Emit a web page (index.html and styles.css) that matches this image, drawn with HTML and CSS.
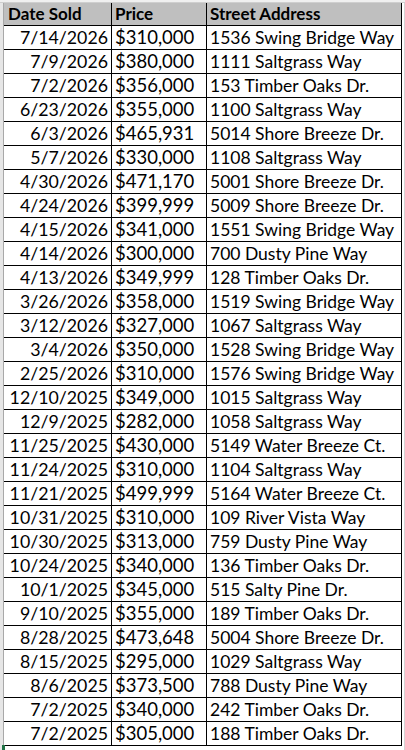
FILE: index.html
```html
<!DOCTYPE html>
<html>
<head>
<meta charset="utf-8">
<link rel="stylesheet" href="styles.css">
</head>
<body>
<div class="top"></div>
<div class="main">
  <div class="rowhdr"></div>
  <div class="sheet">
    <div class="row head"><div class="c">Date Sold</div><div class="c">Price</div><div class="c">Street Address</div></div>
    <div class="row"><div class="c d">7/14/2026</div><div class="c p">$310,000</div><div class="c a">1536 Swing Bridge Way</div></div>
    <div class="row"><div class="c d">7/9/2026</div><div class="c p">$380,000</div><div class="c a">1111 Saltgrass Way</div></div>
    <div class="row"><div class="c d">7/2/2026</div><div class="c p">$356,000</div><div class="c a">153 Timber Oaks Dr.</div></div>
    <div class="row"><div class="c d">6/23/2026</div><div class="c p">$355,000</div><div class="c a">1100 Saltgrass Way</div></div>
    <div class="row"><div class="c d">6/3/2026</div><div class="c p">$465,931</div><div class="c a">5014 Shore Breeze Dr.</div></div>
    <div class="row"><div class="c d">5/7/2026</div><div class="c p">$330,000</div><div class="c a">1108 Saltgrass Way</div></div>
    <div class="row"><div class="c d">4/30/2026</div><div class="c p">$471,170</div><div class="c a">5001 Shore Breeze Dr.</div></div>
    <div class="row"><div class="c d">4/24/2026</div><div class="c p">$399,999</div><div class="c a">5009 Shore Breeze Dr.</div></div>
    <div class="row"><div class="c d">4/15/2026</div><div class="c p">$341,000</div><div class="c a">1551 Swing Bridge Way</div></div>
    <div class="row"><div class="c d">4/14/2026</div><div class="c p">$300,000</div><div class="c a">700 Dusty Pine Way</div></div>
    <div class="row"><div class="c d">4/13/2026</div><div class="c p">$349,999</div><div class="c a">128 Timber Oaks Dr.</div></div>
    <div class="row"><div class="c d">3/26/2026</div><div class="c p">$358,000</div><div class="c a">1519 Swing Bridge Way</div></div>
    <div class="row"><div class="c d">3/12/2026</div><div class="c p">$327,000</div><div class="c a">1067 Saltgrass Way</div></div>
    <div class="row"><div class="c d">3/4/2026</div><div class="c p">$350,000</div><div class="c a">1528 Swing Bridge Way</div></div>
    <div class="row"><div class="c d">2/25/2026</div><div class="c p">$310,000</div><div class="c a">1576 Swing Bridge Way</div></div>
    <div class="row"><div class="c d">12/10/2025</div><div class="c p">$349,000</div><div class="c a">1015 Saltgrass Way</div></div>
    <div class="row"><div class="c d">12/9/2025</div><div class="c p">$282,000</div><div class="c a">1058 Saltgrass Way</div></div>
    <div class="row"><div class="c d">11/25/2025</div><div class="c p">$430,000</div><div class="c a">5149 Water Breeze Ct.</div></div>
    <div class="row"><div class="c d">11/24/2025</div><div class="c p">$310,000</div><div class="c a">1104 Saltgrass Way</div></div>
    <div class="row"><div class="c d">11/21/2025</div><div class="c p">$499,999</div><div class="c a">5164 Water Breeze Ct.</div></div>
    <div class="row"><div class="c d">10/31/2025</div><div class="c p">$310,000</div><div class="c a">109 River Vista Way</div></div>
    <div class="row"><div class="c d">10/30/2025</div><div class="c p">$313,000</div><div class="c a">759 Dusty Pine Way</div></div>
    <div class="row"><div class="c d">10/24/2025</div><div class="c p">$340,000</div><div class="c a">136 Timber Oaks Dr.</div></div>
    <div class="row"><div class="c d">10/1/2025</div><div class="c p">$345,000</div><div class="c a">515 Salty Pine Dr.</div></div>
    <div class="row"><div class="c d">9/10/2025</div><div class="c p">$355,000</div><div class="c a">189 Timber Oaks Dr.</div></div>
    <div class="row"><div class="c d">8/28/2025</div><div class="c p">$473,648</div><div class="c a">5004 Shore Breeze Dr.</div></div>
    <div class="row"><div class="c d">8/15/2025</div><div class="c p">$295,000</div><div class="c a">1029 Saltgrass Way</div></div>
    <div class="row"><div class="c d">8/6/2025</div><div class="c p">$373,500</div><div class="c a">788 Dusty Pine Way</div></div>
    <div class="row"><div class="c d">7/2/2025</div><div class="c p">$340,000</div><div class="c a">242 Timber Oaks Dr.</div></div>
    <div class="row"><div class="c d">7/2/2025</div><div class="c p">$305,000</div><div class="c a">188 Timber Oaks Dr.</div></div>
  </div>
  <div class="rest"></div>
</div>
<div class="mark"></div>
</body>
</html>
```
FILE: styles.css
```css
html, body {
  margin: 0;
  padding: 0;
  background: #ffffff;
  width: 405px;
  height: 750px;
  overflow: hidden;
  position: relative;
}
body {
  font-family: "Lato", "Noto Sans", sans-serif;
  font-size: 17px;
  color: #000;
}
.top {
  height: 2px;
  background: #f0f0f0;
  border-bottom: 1px solid #cfcfcf;
}
.main {
  display: flex;
  align-items: stretch;
  height: 747px;
}
.rowhdr {
  width: 3px;
  background: #e6e6e6;
  border-right: 1px solid #a8a8a8;
}
.sheet {
  display: flex;
  flex-direction: column;
  width: 398px;
}
.row {
  display: grid;
  grid-template-columns: 108px 95px 195px;
}
.c {
  box-sizing: border-box;
  height: 24px;
  line-height: 23px;
  padding: 0 3px 0 3px;
  border-right: 1px solid #000;
  border-bottom: 1px solid #000;
  white-space: nowrap;
  overflow: hidden;
}
.d {
  text-align: right;
  font-size: 17.75px;
}
.p {
  font-size: 18.5px;
}
.a {
  font-size: 17.5px;
}
.head .c {
  height: 23px;
  line-height: 22px;
  background: #bfbfbf;
  font-weight: bold;
}
.head .c:first-child {
  padding-left: 4px;
}
.rest {
  width: 2px;
  border-right: 1px solid #d4d4d4;
}
.mark {
  position: absolute;
  left: 2px;
  top: 745px;
  width: 3px;
  height: 5px;
  background: #217346;
}
```
